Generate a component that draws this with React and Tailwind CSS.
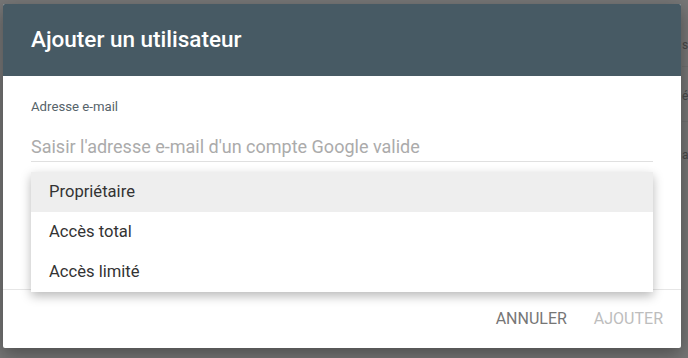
import React from 'react';

const roles = ['Propriétaire', 'Accès total', 'Accès limité'];

const AddUserDialog = () => {
  return (
    <div className="relative ml-[3px] mt-[4px] w-[678px] h-[344px] bg-white rounded-[2px] shadow-[0_6px_18px_rgba(0,0,0,0.35)] flex flex-col">
      <div className="h-[72px] bg-[#475a64] rounded-t-[2px] px-[28px] flex items-center">
        <h1 className="text-[22.5px] font-medium text-white">Ajouter un utilisateur</h1>
      </div>

      <div className="h-[213px] px-[28px] pt-[23px]">
        <label className="block text-[13.2px] leading-[16px] text-[#56636a]">Adresse e-mail</label>
        <div className="mt-[20px] pb-[2px] border-b border-[#e0e0e0] text-[18px] leading-[24px] text-[#ababab]">
          Saisir l'adresse e-mail d'un compte Google valide
        </div>
      </div>

      <div className="flex-1 border-t border-[#e6e6e6] flex items-center justify-end gap-[27px] pr-[18px]">
        <button className="text-[16px] text-[#767676]">ANNULER</button>
        <button className="text-[16px] text-[#bdbdbd]">AJOUTER</button>
      </div>

      {/* role menu opened over the form */}
      <div className="absolute left-[28px] top-[168px] w-[622px] bg-white shadow-[0_4px_10px_rgba(0,0,0,0.28)]">
        {roles.map((role, i) => (
          <div
            key={role}
            className={`h-[40px] px-[18px] flex items-center text-[16.6px] text-[#333333] ${i === 0 ? 'bg-[#eeeeee]' : ''}`}
          >
            {role}
          </div>
        ))}
      </div>
    </div>
  );
};

export default function App() {
  return (
    <div className="relative w-[688px] h-[358px] overflow-hidden bg-[#767676] font-['Roboto',sans-serif]">
      {/* page underneath the scrim, only its right edge shows */}
      <div className="absolute left-[682px] top-0 w-[6px] text-[12px] leading-[14px] text-[#474747]">
        <div className="h-[67px] pt-[38px] border-b border-[#6f6f6f]">s</div>
        <div className="h-[55px] pt-[22px] border-b border-[#6f6f6f]">é</div>
        <div className="pt-[26px]">a</div>
      </div>
      <AddUserDialog />
    </div>
  );
}
